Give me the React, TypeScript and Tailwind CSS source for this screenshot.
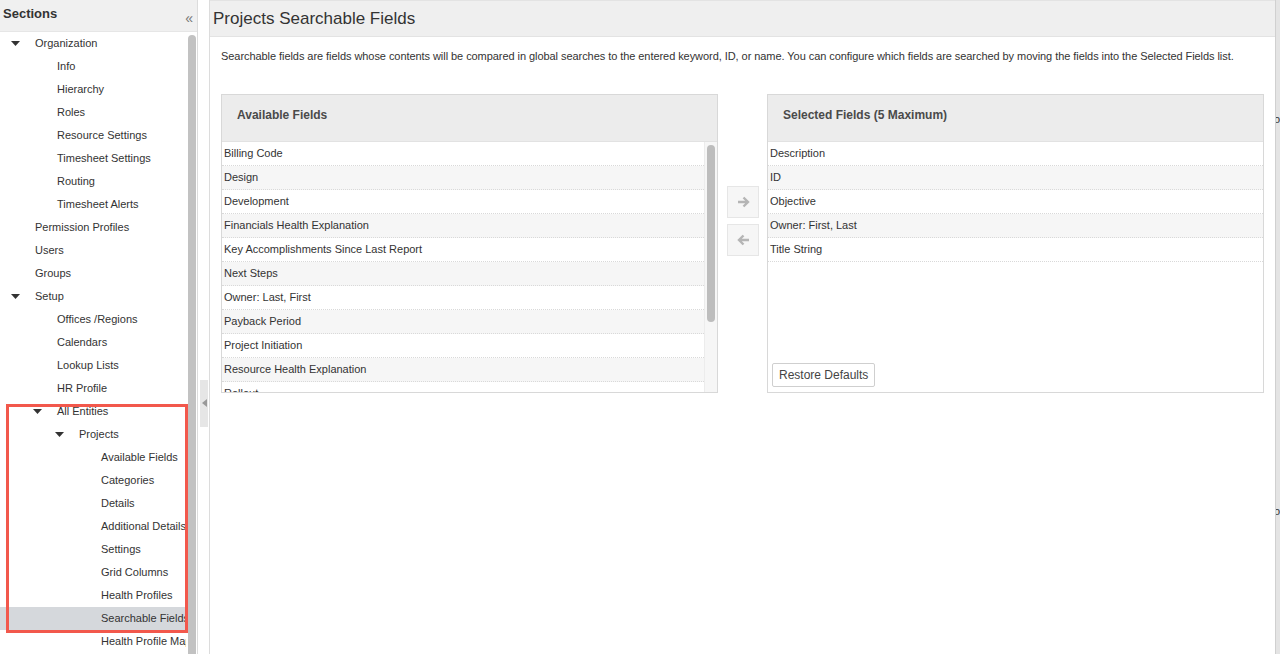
const tree: { label: string; level: number; caret?: boolean; selected?: boolean }[] = [
  { label: "Organization", level: 0, caret: true },
  { label: "Info", level: 1 },
  { label: "Hierarchy", level: 1 },
  { label: "Roles", level: 1 },
  { label: "Resource Settings", level: 1 },
  { label: "Timesheet Settings", level: 1 },
  { label: "Routing", level: 1 },
  { label: "Timesheet Alerts", level: 1 },
  { label: "Permission Profiles", level: 0 },
  { label: "Users", level: 0 },
  { label: "Groups", level: 0 },
  { label: "Setup", level: 0, caret: true },
  { label: "Offices /Regions", level: 1 },
  { label: "Calendars", level: 1 },
  { label: "Lookup Lists", level: 1 },
  { label: "HR Profile", level: 1 },
  { label: "All Entities", level: 1, caret: true },
  { label: "Projects", level: 2, caret: true },
  { label: "Available Fields", level: 3 },
  { label: "Categories", level: 3 },
  { label: "Details", level: 3 },
  { label: "Additional Details", level: 3 },
  { label: "Settings", level: 3 },
  { label: "Grid Columns", level: 3 },
  { label: "Health Profiles", level: 3 },
  { label: "Searchable Fields", level: 3, selected: true },
  { label: "Health Profile Mapping", level: 3 },
];

const available = [
  "Billing Code",
  "Design",
  "Development",
  "Financials Health Explanation",
  "Key Accomplishments Since Last Report",
  "Next Steps",
  "Owner: Last, First",
  "Payback Period",
  "Project Initiation",
  "Resource Health Explanation",
  "Rollout",
  "Schedule Health Explanation",
  "Scope Health Explanation",
];

const selected = ["Description", "ID", "Objective", "Owner: First, Last", "Title String"];

const indent = ["pl-[35px]", "pl-[57px]", "pl-[79px]", "pl-[101px]"];
const caretPos = ["left-[11px]", "left-[33px]", "left-[55px]", "left-[77px]"];

function Caret({ level }: { level: number }) {
  return (
    <svg className={`absolute top-[9px] ${caretPos[level]}`} width="9" height="5" viewBox="0 0 9 5">
      <path d="M0 0 L9 0 L4.5 5 Z" fill="#333" />
    </svg>
  );
}

function ListRow({ text, i }: { text: string; i: number }) {
  return (
    <div
      className={`h-6 shrink-0 flex items-center px-[2px] pt-[1px] border-b border-dotted border-[#d9d9d9] text-[11px] text-[#333] whitespace-nowrap ${
        i % 2 === 1 ? "bg-[#f6f6f6]" : "bg-white"
      }`}
    >
      {text}
    </div>
  );
}

function PanelHeader({ title }: { title: string }) {
  return (
    <div className="h-[47px] shrink-0 bg-[#ececec] border-b border-[#e2e2e2] flex items-center pl-[15px] pb-[6px] text-[12px] font-bold text-[#4a4a4a]">
      {title}
    </div>
  );
}

export default function App() {
  return (
    <div
      className="h-[654px] w-[1280px] overflow-hidden flex bg-white text-[#333]"
      style={{ fontFamily: '"Liberation Sans", Arial, sans-serif' }}
    >
      {/* Sidebar */}
      <div className="relative w-[198px] shrink-0 flex flex-col border-r border-[#dcdcdc]">
        <div className="h-[32px] shrink-0 bg-[#f0f0f0] border-b border-[#e6e6e6] flex items-center justify-between pl-[3px] pr-[4px]">
          <span className="text-[13px] text-[#333] font-semibold -mt-[3px]">Sections</span>
          <span className="text-[14px] text-[#777] mt-[6px]">«</span>
        </div>
        <div className="flex flex-1 min-h-0">
          <div className="w-[186px] overflow-hidden">
            {tree.map((t) => (
              <div
                key={t.label}
                className={`relative h-[23px] flex items-center whitespace-nowrap text-[11px] text-[#333] ${indent[t.level]} ${
                  t.selected ? "bg-[#d5d8dc]" : ""
                }`}
              >
                {t.caret && <Caret level={t.level === 0 ? 0 : t.level === 1 ? 1 : 2} />}
                {t.label}
              </div>
            ))}
          </div>
          <div className="w-[11px] pt-[3px] flex justify-center">
            <div className="w-[8px] h-full bg-[#c2c2c2] rounded-t-[4px]" />
          </div>
        </div>
        {/* annotation box */}
        <div className="absolute left-[6px] top-[404px] w-[182px] h-[229px] border-[3px] border-[#f2584c] pointer-events-none" />
      </div>

      {/* Splitter */}
      <div className="w-[12px] shrink-0 flex items-center pl-[2px] pr-[1px] border-r border-[#dcdcdc]">
        <div className="w-full h-[47px] bg-[#e6e6e6] flex items-center justify-center mt-[152px]">
          <svg width="5" height="8" viewBox="0 0 5 8">
            <path d="M5 0 L5 8 L0 4 Z" fill="#999" />
          </svg>
        </div>
      </div>

      {/* Main */}
      <div className="flex-1 min-w-0 flex flex-col">
        <div className="h-[37px] shrink-0 bg-[#efefef] border-t border-b border-[#e3e3e3] flex items-center pl-[3px]">
          <h1 className="text-[17px] text-[#333] font-normal">Projects Searchable Fields</h1>
        </div>
        <div className="px-[11px]">
          <p className="text-[11px] text-[#333] mt-[11px] whitespace-nowrap tracking-[-0.06px]">
            Searchable fields are fields whose contents will be compared in global searches to the entered keyword, ID, or name. You can configure which fields are searched by moving the fields into the Selected Fields list.
          </p>
          <div className="flex mt-[29px] h-[299px]">
            {/* Available */}
            <div className="flex-1 flex flex-col border border-[#d8d8d8]">
              <PanelHeader title="Available Fields" />
              <div className="flex flex-1 min-h-0">
                <div className="flex-1 overflow-hidden">
                  {available.map((f, i) => (
                    <ListRow key={f} text={f} i={i} />
                  ))}
                </div>
                <div className="w-[13px] shrink-0 bg-[#f6f6f6] border-l border-[#ececec] flex justify-center pt-[3px]">
                  <div className="w-[8px] h-[177px] bg-[#bdbdbd] rounded-full" />
                </div>
              </div>
            </div>

            {/* Arrows */}
            <div className="w-[49px] shrink-0 flex flex-col items-center pt-[92px] gap-[6px] pl-[1px]">
              <div className="w-[32px] h-[32px] bg-[#f6f6f6] border border-[#e6e6e6] flex items-center justify-center">
                <svg width="13" height="12" viewBox="0 0 13 12">
                  <path d="M1 6 H11 M6.5 1.5 L11 6 L6.5 10.5" stroke="#b5b5b5" strokeWidth="2.4" fill="none" />
                </svg>
              </div>
              <div className="w-[32px] h-[32px] bg-[#f6f6f6] border border-[#e6e6e6] flex items-center justify-center">
                <svg width="13" height="12" viewBox="0 0 13 12">
                  <path d="M12 6 H2 M6.5 1.5 L2 6 L6.5 10.5" stroke="#b5b5b5" strokeWidth="2.4" fill="none" />
                </svg>
              </div>
            </div>

            {/* Selected */}
            <div className="flex-1 flex flex-col border border-[#d8d8d8]">
              <PanelHeader title="Selected Fields (5 Maximum)" />
              <div className="flex-1 flex flex-col">
                {selected.map((f, i) => (
                  <ListRow key={f} text={f} i={i} />
                ))}
                <div className="flex-1" />
                <div className="pl-[4px] pb-[5px]">
                  <button className="h-[24px] px-[6px] bg-white border border-[#cfcfcf] rounded-[2px] text-[12px] text-[#444]">
                    Restore Defaults
                  </button>
                </div>
              </div>
            </div>
          </div>
        </div>
      </div>

      {/* Right edge strip */}
      <div className="w-[5px] shrink-0 bg-[#e4e4e4] border-l border-[#d0d0d0] relative overflow-hidden">
        <span className="absolute left-[-2px] top-[111px] text-[11px] text-[#333]">o</span>
        <span className="absolute left-[-2px] top-[503px] text-[11px] text-[#333]">o</span>
      </div>
    </div>
  );
}
